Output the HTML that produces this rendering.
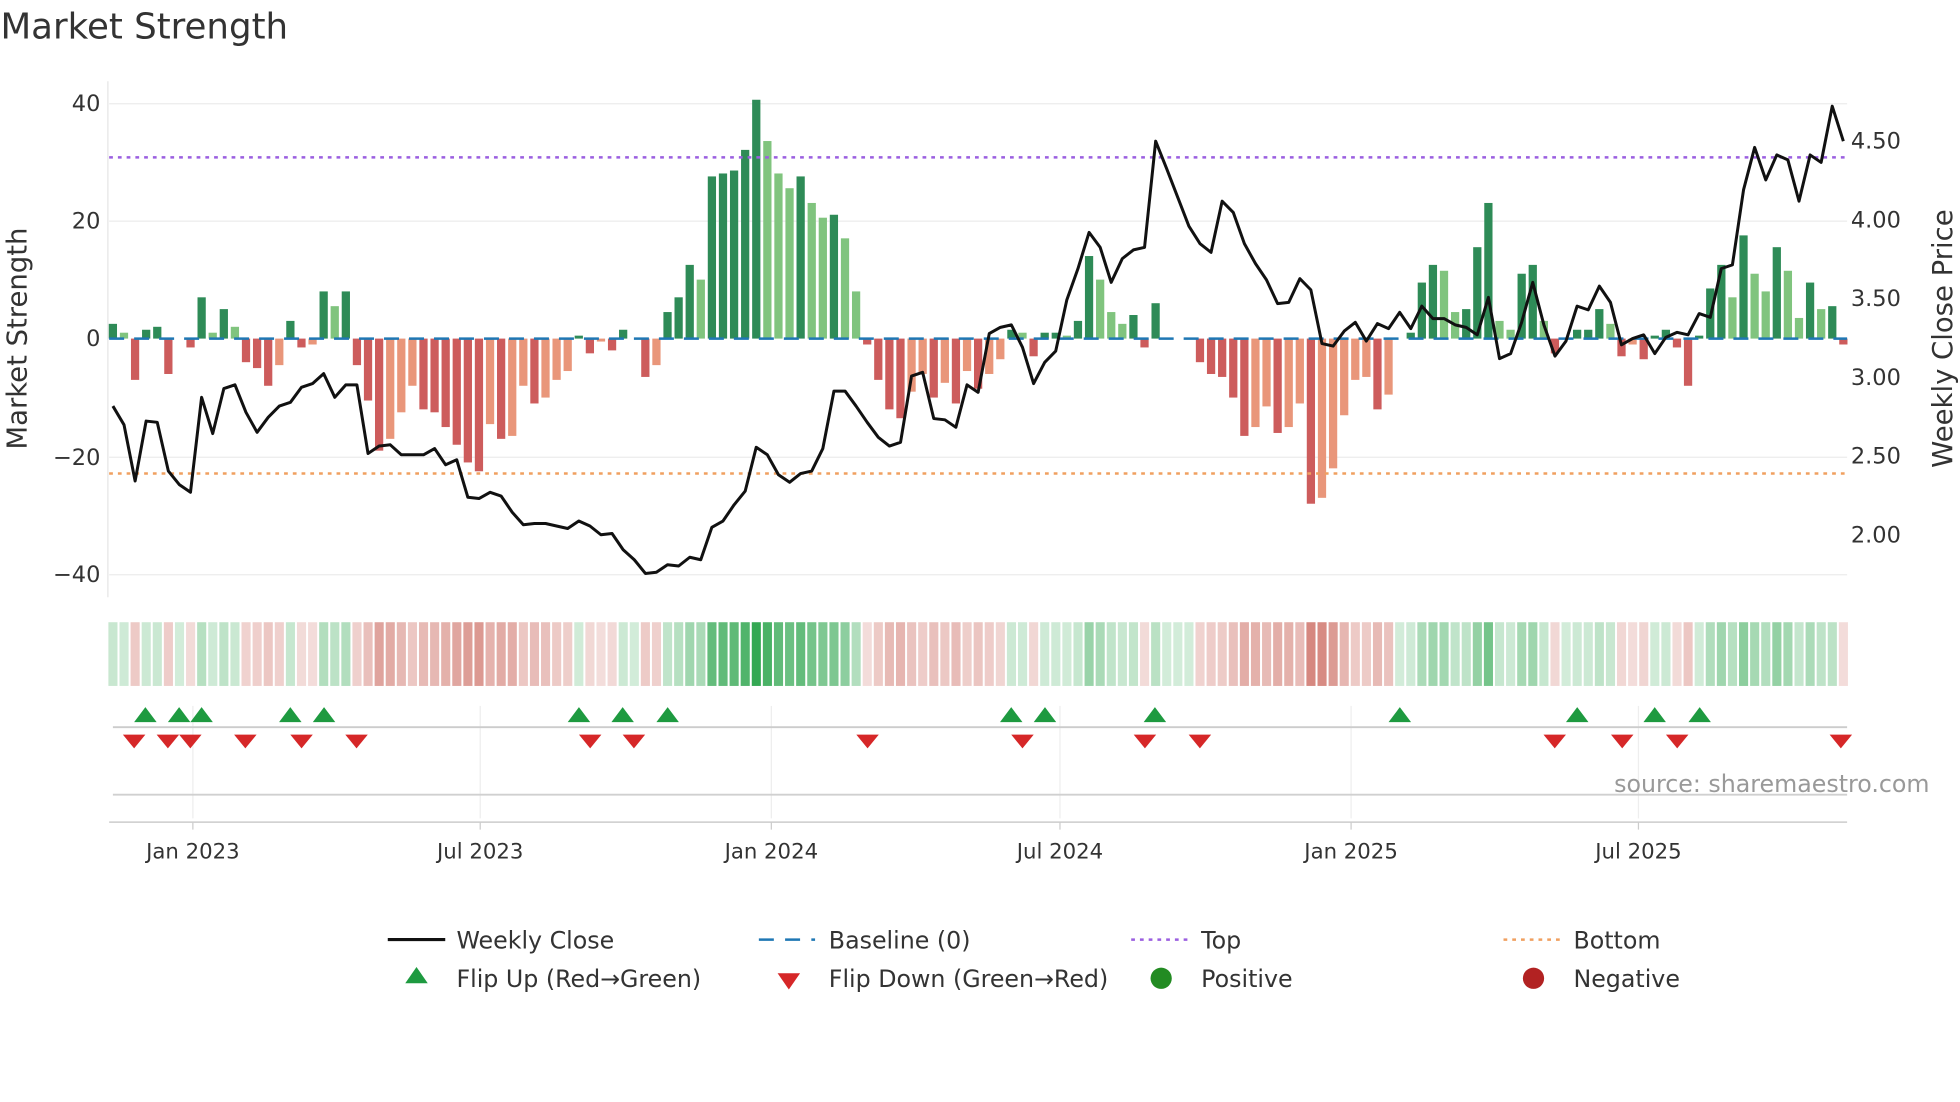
<!DOCTYPE html>
<html><head><meta charset="utf-8"><style>
html,body{margin:0;padding:0;background:#fff;width:1960px;height:1102px;overflow:hidden}
svg{display:block;font-family:"DejaVu Sans","Liberation Sans",sans-serif}
</style></head><body>
<svg id="s" width="1960" height="1102" viewBox="0 0 1568 882" xmlns="http://www.w3.org/2000/svg">
<text x="0" y="31" font-size="28.5" fill="#333">Market Strength</text>
<g stroke="#ececec" stroke-width="1">
<line x1="87" y1="83" x2="1478" y2="83"/><line x1="87" y1="177" x2="1478" y2="177"/><line x1="87" y1="366" x2="1478" y2="366"/><line x1="87" y1="460" x2="1478" y2="460"/>
</g>
<line x1="86" y1="65" x2="86" y2="478" stroke="#e6e6e6"/>
<g font-size="18" fill="#333" text-anchor="end">
<text x="80" y="89">40</text><text x="80" y="183">20</text><text x="80" y="277">0</text><text x="80" y="372">−20</text><text x="80" y="466">−40</text>
</g>
<g font-size="18" fill="#333">
<text x="1481" y="119">4.50</text><text x="1481" y="182">4.00</text><text x="1481" y="245">3.50</text><text x="1481" y="308">3.00</text><text x="1481" y="371">2.50</text><text x="1481" y="434">2.00</text>
</g>
<text transform="translate(21,271) rotate(-90)" font-size="22" fill="#333" text-anchor="middle">Market Strength</text>
<text transform="translate(1562,271) rotate(-90)" font-size="22" fill="#333" text-anchor="middle">Weekly Close Price</text>
<g id="bars"></g>
<line x1="87" y1="271" x2="1478" y2="271" stroke="#1f77b4" stroke-width="2" stroke-dasharray="12,8"/>
<line x1="87" y1="126" x2="1478" y2="126" stroke="#9b5fe0" stroke-width="2" stroke-dasharray="3,4"/>
<line x1="87" y1="379" x2="1478" y2="379" stroke="#f0a060" stroke-width="2" stroke-dasharray="3,4"/>
<polyline id="price" fill="none" stroke="#111" stroke-width="2.4" stroke-linejoin="round"/>
<g id="heat"></g>
<g stroke="#eee"><line x1="154" y1="565" x2="154" y2="655"/><line x1="384" y1="565" x2="384" y2="655"/><line x1="617" y1="565" x2="617" y2="655"/><line x1="848" y1="565" x2="848" y2="655"/><line x1="1081" y1="565" x2="1081" y2="655"/><line x1="1311" y1="565" x2="1311" y2="655"/></g>
<line x1="90" y1="582" x2="1478" y2="582" stroke="#ccc" stroke-width="1.5"/>
<line x1="90" y1="636" x2="1478" y2="636" stroke="#d0d0d0" stroke-width="1.5"/>
<line x1="87" y1="658" x2="1478" y2="658" stroke="#ccc" stroke-width="1.2"/>
<g stroke="#ccc"><line x1="154" y1="658" x2="154" y2="664"/><line x1="384" y1="658" x2="384" y2="664"/><line x1="617" y1="658" x2="617" y2="664"/><line x1="848" y1="658" x2="848" y2="664"/><line x1="1081" y1="658" x2="1081" y2="664"/><line x1="1311" y1="658" x2="1311" y2="664"/></g>
<g id="marks"></g>
<text x="1544" y="634" font-size="19" fill="#999" text-anchor="end">source: sharemaestro.com</text>
<g font-size="17" fill="#333" text-anchor="middle">
<text x="154" y="687">Jan 2023</text><text x="384" y="687">Jul 2023</text><text x="617" y="687">Jan 2024</text><text x="848" y="687">Jul 2024</text><text x="1081" y="687">Jan 2025</text><text x="1311" y="687">Jul 2025</text>
</g>
<g font-size="19" fill="#333">
<line x1="310" y1="752" x2="356" y2="752" stroke="#111" stroke-width="2.5"/><text x="365" y="759">Weekly Close</text>
<line x1="607" y1="752" x2="652" y2="752" stroke="#1f77b4" stroke-width="2" stroke-dasharray="12,9"/><text x="663" y="759">Baseline (0)</text>
<line x1="905" y1="752" x2="950" y2="752" stroke="#9b5fe0" stroke-width="2" stroke-dasharray="3,4"/><text x="961" y="759">Top</text>
<line x1="1203" y1="752" x2="1248" y2="752" stroke="#f0a060" stroke-width="2" stroke-dasharray="3,4"/><text x="1259" y="759">Bottom</text>
<polygon points="324,787 342,787 333,774" fill="#1e9a40"/><text x="365" y="790">Flip Up (Red→Green)</text>
<polygon points="622,779 640,779 631,792" fill="#d62728"/><text x="663" y="790">Flip Down (Green→Red)</text>
<circle cx="929" cy="783" r="8.5" fill="#228b22"/><text x="961" y="790">Positive</text>
<circle cx="1227" cy="783" r="8.5" fill="#b22222"/><text x="1259" y="790">Negative</text>
</g>
</svg>
<script>
var V=[2.5,1,-7,1.5,2,-6,0,-1.5,7,1,5,2,-4,-5,-8,-4.5,3,-1.5,-1,8,5.5,8,-4.5,-10.5,-19,-17,-12.5,-8,-12,-12.5,-15,-18,-21,-22.5,-14.5,-17,-16.5,-8,-11,-10,-7,-5.5,0.5,-2.5,-0.5,-2,1.5,0,-6.5,-4.5,4.5,7,12.5,10,27.5,28,28.5,32,40.5,33.5,28,25.5,27.5,23,20.5,21,17,8,-1,-7,-12,-13.5,-9,-6,-10,-7.5,-11,-5.5,-8.5,-6,-3.5,1.5,1,-3,1,1,0.5,3,14,10,4.5,2.5,4,-1.5,6,0,0,0,-4,-6,-6.5,-10,-16.5,-15,-11.5,-16,-15,-11,-28,-27,-22,-13,-7,-6.5,-12,-9.5,0,1,9.5,12.5,11.5,4.5,5,15.5,23,3,1.5,11,12.5,3,-2.5,0,1.5,1.5,5,2.5,-3,-1,-3.5,0.5,1.5,-1.5,-8,0.5,8.5,12.5,7,17.5,11,8,15.5,11.5,3.5,9.5,5,5.5,-1];
var P=[325,340,385,337,338,377,388,394,318,347,311,308,330,346,334,325,322,310,307,299,318,308,308,363,357,356,364,364,364,359,372,368,398,399,394,397,410,420,419,419,421,423,417,421,428,427,440,448,459,458,452,453,446,448,422,417,404,393,358,364,380,386,379,377,359,313,313,325,338,350,357,354,301,298,335,336,342,308,314,267,262,260,278,307,290,281,240,215,186,198,226,207,200,198,113,135,158,181,195,202,161,170,195,211,224,243,242,223,232,275,277,265,258,273,259,263,250,263,245,255,255,260,262,268,238,287,283,258,226,260,285,273,245,248,229,242,276,271,268,283,270,266,268,251,254,215,212,152,118,144,124,128,161,124,130,85,113];
var n=V.length,step=(1475-90)/(n-1),b='',h='',pts=[];
for(var i=0;i<n;i++){var x=90+step*i,v=V[i],pv=i?V[i-1]:0,c;
 if(v>=0){c=(v>=pv)?'#2e8b57':'#80c47e';}else{c=(v<=pv)?'#cd5c5c':'#e9967a';}
 var y0=271,y1=271-v*4.72;
 if(Math.abs(v)>0.2)b+='<rect x="'+(x-3.3)+'" y="'+Math.min(y0,y1)+'" width="6.6" height="'+Math.abs(y1-y0)+'" fill="'+c+'"/>';
 var a=Math.min(1,0.22+Math.abs(v)/40*0.8),hc=v>=0?'52,168,83':'205,110,100';
 if(v<0)a=Math.min(1,0.22+Math.abs(v)/28*0.6);
 h+='<rect x="'+(x-3.6)+'" y="498" width="'+(step-1.6)+'" height="51" fill="rgba('+hc+','+a.toFixed(2)+')"/>';
 pts.push(x.toFixed(1)+','+P[i]);}
document.getElementById('bars').innerHTML=b;
document.getElementById('heat').innerHTML=h;
document.getElementById('price').setAttribute('points',pts.join(' '));
var U=[116,143,161,232,259,463,498,534,809,836,924,1120,1262,1324,1360],D=[107,134,152,196,241,285,472,507,694,818,916,960,1244,1298,1342,1473],m='';
U.forEach(function(x){m+='<polygon points="'+(x-9)+',578 '+(x+9)+',578 '+x+',566" fill="#1e9a40"/>';});
D.forEach(function(x){m+='<polygon points="'+(x-9)+',588 '+(x+9)+',588 '+x+',599" fill="#d62728"/>';});
document.getElementById('marks').innerHTML=m;
</script>
</body></html>
